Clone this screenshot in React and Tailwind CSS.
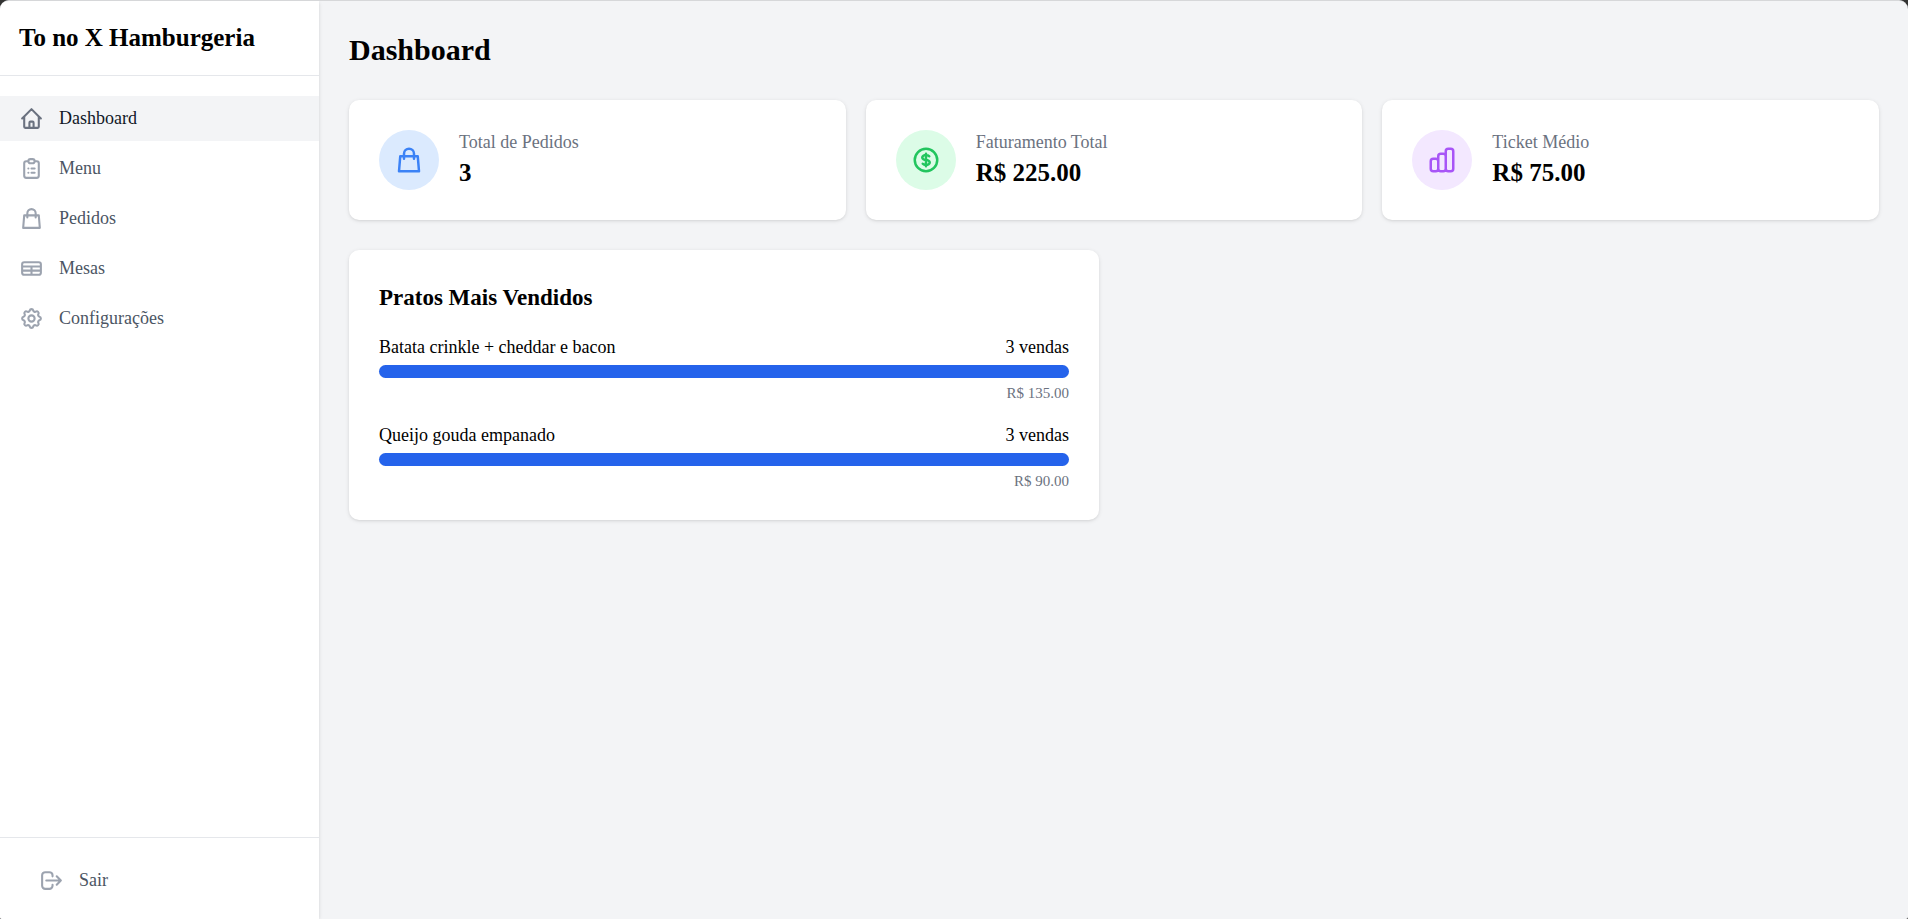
import {
  HiOutlineHome,
  HiOutlineClipboardList,
  HiOutlineShoppingBag,
  HiOutlineTable,
  HiOutlineCog,
  HiOutlineLogout,
  HiOutlineCurrencyDollar,
  HiOutlineChartBar,
} from "react-icons/hi";

const navItems = [
  { label: "Dashboard", icon: HiOutlineHome, active: true },
  { label: "Menu", icon: HiOutlineClipboardList },
  { label: "Pedidos", icon: HiOutlineShoppingBag },
  { label: "Mesas", icon: HiOutlineTable },
  { label: "Configurações", icon: HiOutlineCog },
];

const stats = [
  { label: "Total de Pedidos", value: "3", icon: HiOutlineShoppingBag, tone: "bg-[#dbeafe] text-[#3b82f6]" },
  { label: "Faturamento Total", value: "R$ 225.00", icon: HiOutlineCurrencyDollar, tone: "bg-[#dcfce7] text-[#22c55e]" },
  { label: "Ticket Médio", value: "R$ 75.00", icon: HiOutlineChartBar, tone: "bg-[#f3e8ff] text-[#a855f7]" },
];

const dishes = [
  { name: "Batata crinkle + cheddar e bacon", sales: 3, revenue: "R$ 135.00" },
  { name: "Queijo gouda empanado", sales: 3, revenue: "R$ 90.00" },
];

const maxSales = Math.max(...dishes.map((d) => d.sales));

function Sidebar() {
  return (
    <aside className="z-10 flex w-[319px] shrink-0 flex-col bg-white shadow-[0_1px_4px_rgba(0,0,0,0.1),0_1px_3px_-1px_rgba(0,0,0,0.1)]">
      <div className="border-b border-[#e5e7eb] py-5 pr-5 pl-[19px]">
        <p className="text-[25px] leading-[34px] font-bold">To no X Hamburgeria</p>
      </div>
      <nav className="mt-5 flex flex-1 flex-col gap-[5px]">
        {navItems.map(({ label, icon: Icon, active }) => (
          <a
            key={label}
            href="#"
            aria-current={active ? "page" : undefined}
            className={
              active
                ? "flex items-center gap-[15px] bg-[#f3f4f6] py-[10px] pr-5 pl-[19px] text-[#111827]"
                : "flex items-center gap-[15px] py-[10px] pr-5 pl-[19px] text-[#4b5563]"
            }
          >
            <Icon aria-hidden="true" className={active ? "size-[25px] text-[#6b7280]" : "size-[25px] text-[#9ca3af]"} />
            <span>{label}</span>
          </a>
        ))}
      </nav>
      <div className="border-t border-[#e5e7eb] pt-5 pr-5 pb-4 pl-[19px]">
        <button type="button" className="flex w-full items-center gap-[15px] px-5 py-[10px] text-[#4b5563]">
          <HiOutlineLogout aria-hidden="true" className="size-[25px] text-[#9ca3af]" />
          <span>Sair</span>
        </button>
      </div>
    </aside>
  );
}

const cardClass =
  "rounded-[10px] bg-white shadow-[0_1px_4px_rgba(0,0,0,0.1),0_1px_3px_-1px_rgba(0,0,0,0.1)]";

export default function App() {
  return (
    <div className="min-h-screen bg-[#333333] font-['Liberation_Serif','Times_New_Roman',serif] text-[18px] leading-[25px] text-black">
      <div className="flex min-h-screen overflow-hidden rounded-t-[9px] rounded-b-[2px] border-t border-[#d6d7d9] bg-[#f3f4f6]">
        <Sidebar />
        <main className="min-w-0 flex-1 pt-[29px] pr-[29px] pb-[30px] pl-[30px]">
          <h1 className="text-[30px] leading-[40px] font-bold">Dashboard</h1>
          <section className="mt-[30px] grid grid-cols-3 gap-5">
            {stats.map(({ label, value, icon: Icon, tone }) => (
              <div key={label} className={`${cardClass} flex items-center gap-5 p-[30px]`}>
                <div className={`${tone} rounded-full p-[15px]`}>
                  <Icon aria-hidden="true" className="size-[30px]" />
                </div>
                <div>
                  <p className="text-[#6b7280]">{label}</p>
                  <p className="text-[25px] leading-[35px] font-bold">{value}</p>
                </div>
              </div>
            ))}
          </section>
          <section className={`${cardClass} mt-[30px] max-w-[750px] px-[30px] pt-[30px] pb-[29px]`}>
            <h2 className="text-[23px] leading-[35px] font-bold">Pratos Mais Vendidos</h2>
            <ul className="mt-5 flex flex-col gap-5">
              {dishes.map((dish) => (
                <li key={dish.name}>
                  <div className="flex justify-between">
                    <span>{dish.name}</span>
                    <span>{dish.sales} vendas</span>
                  </div>
                  <div className="mt-[5px] h-[13px] rounded-full bg-[#e5e7eb]">
                    <div
                      className="h-full rounded-full bg-[#2563eb]"
                      style={{ width: `${(dish.sales / maxSales) * 100}%` }}
                    />
                  </div>
                  <p className="mt-[5px] text-right text-[15px] leading-[20px] text-[#6b7280]">{dish.revenue}</p>
                </li>
              ))}
            </ul>
          </section>
        </main>
      </div>
    </div>
  );
}
